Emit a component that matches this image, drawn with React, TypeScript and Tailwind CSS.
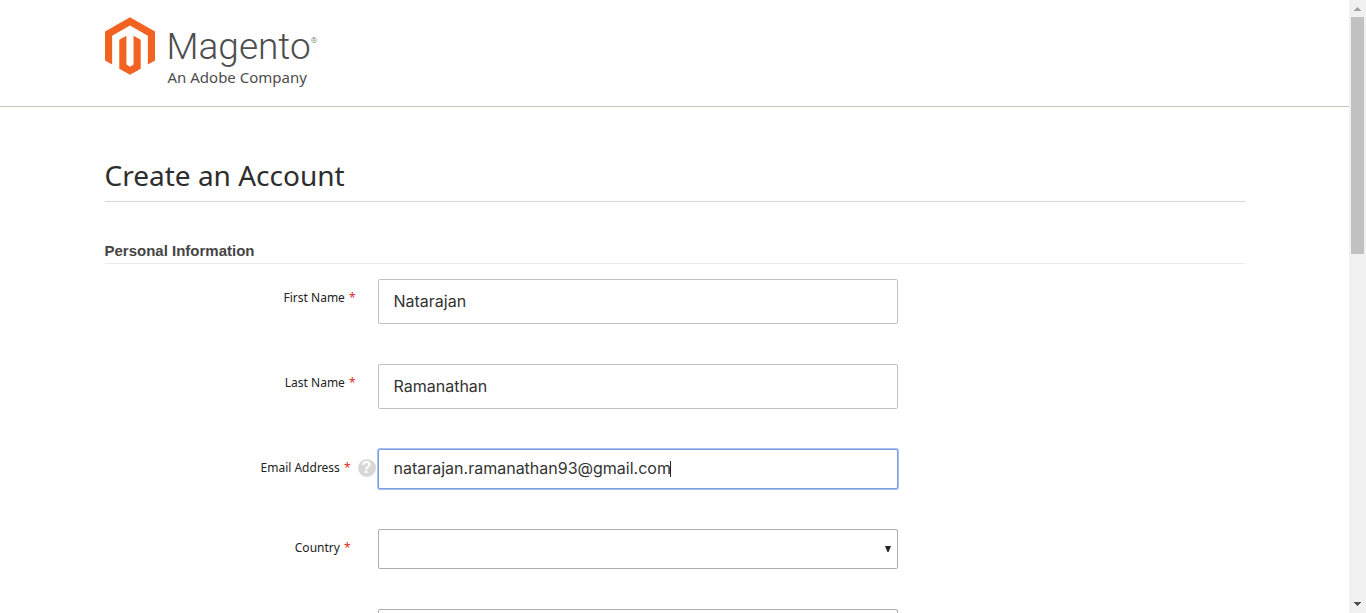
import type { ReactNode } from "react";

function Logo() {
  return (
    <a href="#" aria-label="Magento, An Adobe Company" className="flex w-fit text-[#4d4d4d]">
      <svg viewBox="1.609 0 20.782 24" className="mr-3 h-[58px] w-[50px]" fill="#f26322" aria-hidden="true">
        <path d="M12 24l-4.455-2.572v-12l2.97-1.715v12.001l1.485.902 1.485-.902V7.713l2.971 1.715v12L12 24zM22.391 6v12l-2.969 1.714V7.713L12 3.43 4.574 7.713v12.001L1.609 18V6L12 0l10.391 6z" />
      </svg>
      <span className="flex flex-col pt-2">
        <span className="flex font-['Roboto',sans-serif] text-[37px] leading-[43px] font-light">
          Magento
          <span className="pt-[11px] text-[8px] leading-[10px]">®</span>
        </span>
        <span className="pl-px font-['Noto_Sans',sans-serif] text-[15px] leading-[18px]">An Adobe Company</span>
      </span>
    </a>
  );
}

function Field({ id, label, help, compact, children }: { id: string; label?: string; help?: boolean; compact?: boolean; children: ReactNode }) {
  return (
    <div className="flex items-start">
      <div className="flex w-[273px] shrink-0 items-start justify-end pt-[9px]">
        {label && (
          <label htmlFor={id} className="font-['Noto_Sans',sans-serif] text-[12px] leading-5 text-[#222]">
            {label}
            <span className="ml-1 text-[#e02b27]">*</span>
          </label>
        )}
        {help ? (
          <button type="button" aria-label="Email help" className="mt-px mr-[2px] ml-[7px] size-[18px] rounded-full bg-[#d8d8d8] font-['Liberation_Sans',sans-serif] text-[16px] leading-[18px] font-bold text-white">
            ?
          </button>
        ) : (
          <span className={compact ? "w-[27px]" : "w-[22px]"} />
        )}
      </div>
      <div className="relative w-full max-w-[520px]">{children}</div>
    </div>
  );
}

const textStyle = "block w-full rounded-[2px] border bg-white px-[15px] pb-[2px] font-['Inter',sans-serif] text-[16px] text-[#333] outline-none";

function Select({ id, name }: { id: string; name: string }) {
  return (
    <>
      <select id={id} aria-label={name} className="block h-10 w-full appearance-none rounded-[2px] border border-[#adadad] bg-white px-[15px] outline-none">
        <option value=""></option>
      </select>
      <svg viewBox="0 0 6 6" className="pointer-events-none absolute top-[17px] right-[7px] size-[6px]" fill="#222" aria-hidden="true">
        <path d="M0 0h6L3.5 6h-1z" />
      </svg>
    </>
  );
}

function Scrollbar() {
  return (
    <div className="flex w-[17px] shrink-0 flex-col items-center bg-[#f1f1f1]" aria-hidden="true">
      <svg viewBox="0 0 17 17" className="size-[17px] shrink-0" fill="#a3a3a3">
        <path d="M8 7h1v1h1v1h1v1h1v1H5v-1h1V9h1V8h1z" />
      </svg>
      <div className="h-[237px] w-[13px] bg-[#c1c1c1]" />
      <svg viewBox="0 0 17 17" className="mt-auto size-[17px] shrink-0" fill="#505050">
        <path d="M5 6h7v1h-1v1h-1v1H9v1H8V9H7V8H6V7H5z" />
      </svg>
    </div>
  );
}

export default function App() {
  return (
    <div className="flex h-screen overflow-hidden bg-white">
      <div className="min-w-0 flex-1 overflow-hidden">
        <header className="border-b border-[#cac3b4] pt-[17px] pb-5">
          <div className="mx-auto max-w-[1140px]">
            <Logo />
          </div>
        </header>
        <main className="mx-auto max-w-[1140px] pt-12">
          <h1 className="border-b border-[#d6d6d6] pb-[6px] font-['Noto_Sans',sans-serif] text-[28px] leading-10 text-[#2d2d2d]">Create an Account</h1>
          <form className="pt-[39px]">
            <h2 className="border-b border-[#ebebeb] pb-[2px] font-['Liberation_Sans',Arial,sans-serif] text-[15px] leading-5 font-bold text-[#444]">Personal Information</h2>
            <div className="flex flex-col gap-10 pt-[15px]">
              <Field id="first" label="First Name">
                <input id="first" type="text" defaultValue="Natarajan" className={`${textStyle} h-[45px] border-[#c2c2c2]`} />
              </Field>
              <Field id="last" label="Last Name">
                <input id="last" type="text" defaultValue="Ramanathan" className={`${textStyle} h-[45px] border-[#c2c2c2]`} />
              </Field>
              <Field id="email" label="Email Address" help>
                <input id="email" type="email" defaultValue="natarajan.ramanathan93@gmail.com" className={`${textStyle} h-10 border-[#7c9fdc] ring-1 ring-[#a5c1f5]`} />
                <span className="pointer-events-none absolute top-3 left-[292px] h-4 w-px bg-[#222]" />
              </Field>
              <Field id="country" label="Country" compact>
                <Select id="country" name="Country" />
              </Field>
              <Field id="company" compact>
                <Select id="company" name="Company type" />
              </Field>
            </div>
          </form>
        </main>
      </div>
      <Scrollbar />
    </div>
  );
}
